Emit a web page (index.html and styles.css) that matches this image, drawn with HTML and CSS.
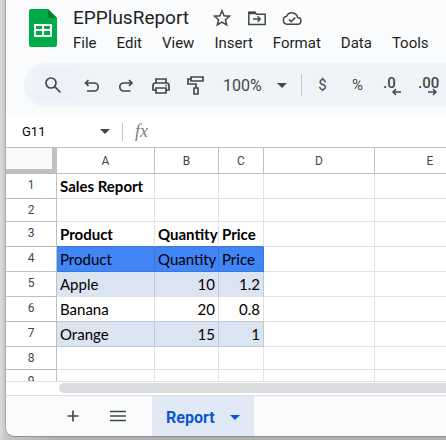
FILE: index.html
```html
<!DOCTYPE html>
<html lang="en">
<head>
    <meta charset="UTF-8">
    <meta name="viewport" content="width=device-width, initial-scale=1.0">
    <title>EPPlusReport</title>
    <link rel="stylesheet" href="styles.css">
</head>
<body>

<div class="app">
    <header class="header">
        <svg class="logo" viewBox="0 0 28 38">
            <path fill="#00ac47" d="M2 0h17l9 9v27a2 2 0 0 1-2 2H2a2 2 0 0 1-2-2V2a2 2 0 0 1 2-2z"/>
            <path fill="#00832d" d="M19 0l9 9h-9z"/>
            <path fill="#fff" fill-rule="evenodd" d="M5 15h18v13H5zM7 17v3h6v-3zM15 17v3h6v-3zM7 22v4h6v-4zM15 22v4h6v-4z"/>
        </svg>
        <div class="doc">
            <div class="title-row">
                <h1 class="title">EPPlusReport</h1>
                <button class="title-btn" aria-label="Star">
                    <svg class="icon-title" viewBox="0 0 20 20"><path d="M10 2.8l2.1 5 5.4.4-4.1 3.5 1.3 5.3-4.7-2.9L5.3 17l1.3-5.3L2.5 8.2l5.4-.4z"/></svg>
                </button>
                <button class="title-btn" aria-label="Move">
                    <svg class="icon-title" viewBox="0 0 20 20"><path d="M1.8 4.2h6l1.8 2h8.6v10.300H1.800zM6 11h7M10.500 8.300l2.700 2.700-2.700 2.700"/><path d="M1.800 5h7" stroke-width="2.500"/></svg>
                </button>
                <button class="title-btn" aria-label="Saved">
                    <svg class="icon-title" viewBox="0 0 20 20"><path d="M5 16.200a4 4 0 0 1-.4-7.900 5.800 5.800 0 0 1 11 1.300 3.300 3.300 0 0 1 0 6.600zM7 11.400l2.200 2.200 4-4"/></svg>
                </button>
            </div>
            <nav class="menu">
                <button>File</button>
                <button>Edit</button>
                <button>View</button>
                <button>Insert</button>
                <button>Format</button>
                <button>Data</button>
                <button>Tools</button>
            </nav>
        </div>
    </header>

    <div class="toolbar">
        <button class="tool search" aria-label="Search">
            <svg class="icon" viewBox="0 0 20 20"><circle cx="8" cy="8" r="5"/><path d="M11.700 11.700l5.800 5.800"/></svg>
        </button>
        <button class="tool" aria-label="Undo">
            <svg class="icon" viewBox="0 0 20 20"><path d="M7.500 5L4.500 8l3 3M4.500 8h8.700a4 4 0 0 1 0 8H6"/></svg>
        </button>
        <button class="tool" aria-label="Redo">
            <svg class="icon" viewBox="0 0 20 20"><path d="M13 5l3 3-3 3M16 8H7.800a4 4 0 0 0 0 8h6.700"/></svg>
        </button>
        <button class="tool" aria-label="Print">
            <svg class="icon" viewBox="0 0 20 20"><path d="M5 8V4h10v4M5 15H2v-4.500A2.500 2.500 0 0 1 4.500 8h11a2.500 2.500 0 0 1 2.500 2.500V15h-3M5 13h10v5H5z"/><path d="M14.500 10.500h1.500"/></svg>
        </button>
        <button class="tool" aria-label="Paint format">
            <svg class="icon" viewBox="0 0 20 20"><path d="M5 2h12v4H5zM5 4H2v5h8v4M8 13h4v6H8z"/></svg>
        </button>
        <label class="zoom">
            <select class="zoom-select" aria-label="Zoom">
                <option>100%</option>
            </select>
            <span class="caret"></span>
        </label>
        <span class="divider"></span>
        <button class="tool">$</button>
        <button class="tool">%</button>
        <button class="tool decimal" aria-label="Decrease decimal places">
            <span>.0</span>
            <svg class="arrow" viewBox="0 0 10 8"><path d="M4 1L1 4l3 3M1 4h8"/></svg>
        </button>
        <button class="tool decimal" aria-label="Increase decimal places">
            <span>.00</span>
            <svg class="arrow" viewBox="0 0 10 8"><path d="M6 1l3 3-3 3M9 4H1"/></svg>
        </button>
    </div>

    <div class="formula-bar">
        <input class="name-box" type="text" value="G11" aria-label="Name box">
        <span class="caret"></span>
        <span class="divider small"></span>
        <span class="fx">fx</span>
    </div>

    <div class="grid">
        <table class="sheet">
            <colgroup>
                <col class="col-head">
                <col class="col-a">
                <col class="col-b">
                <col class="col-c">
                <col class="col-d">
                <col class="col-d">
            </colgroup>
            <thead>
                <tr><th class="corner"></th><th>A</th><th>B</th><th>C</th><th>D</th><th>E</th></tr>
            </thead>
            <tbody>
                <tr><th>1</th><td class="bold">Sales Report</td><td></td><td></td><td></td><td></td></tr>
                <tr class="short"><th>2</th><td></td><td></td><td></td><td></td><td></td></tr>
                <tr><th>3</th><td class="bold above-blue">Product</td><td class="bold above-blue">Quantity</td><td class="bold above-blue">Price</td><td></td><td></td></tr>
                <tr><th>4</th><td class="blue">Product</td><td class="blue">Quantity</td><td class="blue">Price</td><td></td><td></td></tr>
                <tr><th>5</th><td class="band">Apple</td><td class="band num">10</td><td class="band num">1.2</td><td></td><td></td></tr>
                <tr><th>6</th><td class="above-band">Banana</td><td class="above-band num">20</td><td class="above-band num">0.8</td><td></td><td></td></tr>
                <tr><th>7</th><td class="band above-band">Orange</td><td class="band above-band num">15</td><td class="band above-band num">1</td><td></td><td></td></tr>
                <tr class="short"><th>8</th><td></td><td></td><td></td><td></td><td></td></tr>
                <tr class="short"><th>9</th><td></td><td></td><td></td><td></td><td></td></tr>
            </tbody>
        </table>
    </div>
    <div class="scroll-row">
        <div class="scroll-thumb"></div>
    </div>

    <footer class="tabs">
        <button class="tab-btn" aria-label="Add sheet">
            <svg class="icon" viewBox="0 0 20 20"><path d="M10 4.500v11M4.500 10h11"/></svg>
        </button>
        <button class="tab-btn" aria-label="All sheets">
            <svg class="icon" viewBox="0 0 20 20"><path d="M2 5.500h16M2 10h16M2 14.500h16"/></svg>
        </button>
        <button class="tab">Report <span class="caret"></span></button>
    </footer>
</div>

</body>
</html>
```
FILE: styles.css
```css
* {
    box-sizing: border-box;
}
body {
    margin: 0;
    height: 100vh;
    padding: 0 0 3px 5px;
    overflow: hidden;
    background: linear-gradient(to right, #dadbdc, #c6c7c9 5px, #b0b0b0 60px);
    font-family: Roboto, "Liberation Sans", sans-serif;
    color: #1f1f1f;
}
button, input, select {
    font: inherit;
    color: inherit;
    border: none;
    padding: 0;
    margin: 0;
    background: none;
}
button {
    cursor: pointer;
}
svg {
    display: block;
    flex: none;
}
.app {
    display: flex;
    flex-direction: column;
    height: 100%;
    overflow: hidden;
    background-color: #f9fbfd;
    border-left: 1px solid #a9a9a9;
    border-bottom: 1px solid #8f8f8f;
    border-bottom-left-radius: 9px;
}

/* title and menu */
.header {
    display: flex;
    padding: 4px 0 7px 23px;
}
.logo {
    width: 28px;
    height: 38px;
    margin-top: 5px;
}
.doc {
    margin-left: 16px;
}
.title-row {
    display: flex;
    align-items: center;
    height: 27px;
}
.title {
    margin: 0 15px 0 0;
    font-size: 19px;
    line-height: 26px;
    font-weight: 400;
}
.title-btn {
    display: flex;
    justify-content: center;
    width: 35px;
}
.icon-title {
    width: 20px;
    height: 20px;
    fill: none;
    stroke: #444746;
    stroke-width: 1.5;
}
.menu {
    display: flex;
    gap: 20px;
    font-size: 15px;
    line-height: 25px;
}

/* toolbar */
.toolbar {
    display: flex;
    flex: none;
    align-items: center;
    height: 44px;
    margin: 0 0 9px 18px;
    padding-left: 9px;
    border-radius: 22px 0 0 22px;
    background-color: #f0f4f9;
    color: #444746;
    overflow: hidden;
}
.tool {
    display: flex;
    flex: none;
    align-items: center;
    justify-content: center;
    width: 35px;
    height: 32px;
    font-size: 15px;
}
.search {
    width: 40px;
    background-color: #edf2fa;
}
.icon {
    width: 20px;
    height: 20px;
    fill: none;
    stroke: #444746;
    stroke-width: 1.7;
}
.zoom {
    display: flex;
    flex: none;
    align-items: center;
    width: 88px;
    padding-left: 10px;
}
.zoom-select {
    appearance: none;
    width: 54px;
    font-size: 16px;
}
.caret {
    flex: none;
    border: 5px solid transparent;
    border-top-color: currentColor;
    border-bottom: none;
}
.divider {
    flex: none;
    width: 1px;
    height: 22px;
    margin-right: 3px;
    background-color: #c7c7c7;
}
.decimal {
    flex-direction: column;
    align-items: flex-start;
    padding: 0 8px;
    font-weight: 500;
    line-height: 16px;
}
.arrow {
    width: 10px;
    height: 8px;
    margin-top: -3px;
    align-self: flex-end;
    fill: none;
    stroke: #444746;
    stroke-width: 1.5;
}

/* name box */
.formula-bar {
    display: flex;
    flex: none;
    align-items: center;
    height: 32px;
    padding-left: 16px;
    background-color: #fff;
    border-bottom: 1px solid #c0c0c0;
}
.name-box {
    width: 78px;
    font-size: 13px;
    color: #000;
}
.formula-bar .caret {
    color: #444746;
}
.small {
    height: 18px;
    margin: 0 12px;
}
.fx {
    font-family: "Liberation Serif", serif;
    font-size: 18px;
    font-style: italic;
    color: #808080;
}

/* cells */
.grid {
    flex: 1;
    min-height: 0;
    overflow: hidden;
    background-color: #fff;
    border-bottom: 1px solid #e1e1e1;
}
.sheet {
    table-layout: fixed;
    width: 480px;
    border-collapse: separate;
    border-spacing: 0;
}
.col-head {
    width: 51px;
}
.col-a {
    width: 98px;
}
.col-b {
    width: 64px;
}
.col-c {
    width: 45px;
}
.col-d {
    width: 111px;
}
.sheet th, .sheet td {
    height: 25px;
    padding: 0 3px;
    border-right: 1px solid #e1e1e1;
    border-bottom: 1px solid #e1e1e1;
    white-space: nowrap;
    line-height: 20px;
}
.sheet th {
    border-color: #c0c0c0;
    font-size: 12px;
    font-weight: 400;
    color: #444746;
}
.sheet thead th {
    height: 26px;
}
.sheet .corner {
    background-color: #f8f9fa;
    border-right: 5px solid #c0c0c0;
    border-bottom: 5px solid #c0c0c0;
}
.sheet tbody th {
    padding-top: 1px;
    vertical-align: top;
}
.sheet td {
    padding-bottom: 2px;
    font-family: Lato, "Open Sans", sans-serif;
    font-size: 15px;
    color: #000;
    text-align: left;
    vertical-align: bottom;
}
.sheet .short th, .sheet .short td {
    height: 23px;
}
.sheet .bold {
    font-weight: 700;
}
.sheet .blue {
    background-color: #4285f4;
    border-color: #3b78dc;
}
.sheet .band {
    background-color: #dbe5f1;
    border-right-color: #bfc9d6;
}
.sheet .above-blue {
    border-bottom-color: #3b78dc;
}
.sheet .above-band {
    border-bottom-color: #bfc9d6;
}
.sheet .num {
    text-align: right;
}
.scroll-row {
    flex: none;
    height: 14px;
    padding: 1px 0 2px 53px;
    background-color: #fff;
    border-bottom: 1px solid #e1e1e1;
}
.scroll-thumb {
    height: 10px;
    border-radius: 5px 0 0 5px;
    background-color: #dadce0;
}

/* sheet tabs */
.tabs {
    display: flex;
    flex: none;
    height: 40px;
    padding-left: 44px;
}
.tab-btn {
    display: flex;
    align-items: center;
    justify-content: center;
    width: 45px;
}
.tab {
    display: flex;
    align-items: center;
    gap: 15px;
    margin-left: 12px;
    padding: 2px 14px 0 14px;
    background-color: #e1e9f7;
    color: #0b57d0;
    font-size: 16px;
    font-weight: 700;
}
```
